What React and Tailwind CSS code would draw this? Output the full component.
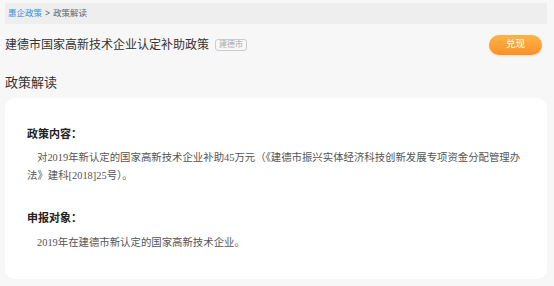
export default function App() {
  const sans = { fontFamily: '"Liberation Sans", "Noto Sans CJK SC", sans-serif' };
  const serif = { fontFamily: '"Liberation Serif", "Noto Sans CJK SC", serif' };
  return (
    <div className="w-[554px] h-[286px] bg-[#f7f7f7] overflow-hidden pt-[3px] pl-[5px] pr-[7px]" style={sans}>
      <div className="h-[21px] bg-[#eeeeee] flex items-center pl-[3px] text-[8.5px] text-[#666]">
        <span className="text-[#3b8fe0]">惠企政策</span>
        <span className="mx-[3px]">&gt;</span>
        <span>政策解读</span>
      </div>

      <div className="flex items-center justify-between mt-[10px] h-[21px]">
        <div className="flex items-center">
          <span className="text-[12px] text-[#333]">建德市国家高新技术企业认定补助政策</span>
          <span className="ml-[6px] border border-[#ccc] rounded-[3px] px-[3px] h-[12px] leading-[10px] text-[8px] text-[#aaa]">建德市</span>
        </div>
        <button className="mr-[5px] w-[53px] h-[20px] rounded-full bg-gradient-to-b from-[#fcb444] to-[#f7912a] text-white text-[9.5px] shadow-[0_1px_2px_rgba(247,145,42,0.3)]">
          兑现
        </button>
      </div>

      <div className="mt-[20px] text-[13px] text-[#333] leading-[16px]">政策解读</div>

      <div className="mt-[7px] h-[181px] bg-white rounded-[10px] pl-[22px] pt-[29px]" style={serif}>
        <div className="text-[11px] font-bold text-[#222] leading-[14px]">政策内容：</div>
        <div className="mt-[8px] text-[10.4px] text-[#555] leading-[18px]">
          <div className="whitespace-nowrap pl-[10px]">对2019年新认定的国家高新技术企业补助45万元（《建德市振兴实体经济科技创新发展专项资金分配管理办</div>
          <div className="whitespace-nowrap">法》建科[2018]25号）。</div>
        </div>
        <div className="mt-[26px] text-[11px] font-bold text-[#222] leading-[14px]">申报对象：</div>
        <div className="mt-[9px] text-[10.4px] text-[#555] leading-[18px] whitespace-nowrap pl-[10px]">
          2019年在建德市新认定的国家高新技术企业。
        </div>
      </div>
    </div>
  );
}
